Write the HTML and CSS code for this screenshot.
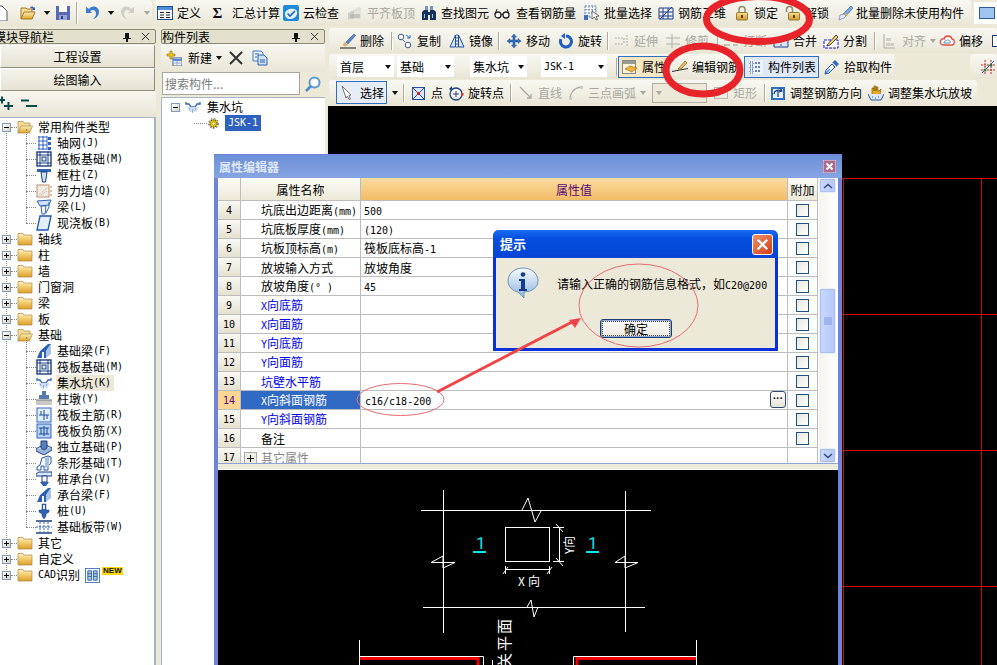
FILE: index.html
```html
<!DOCTYPE html>
<html lang="zh-CN">
<head>
<meta charset="utf-8">
<title>属性编辑器</title>
<link rel="stylesheet" href="styles.css">
</head>
<body>
<svg class="defs" width="0" height="0" aria-hidden="true">
<defs>
<linearGradient id="gFold" x1="0" y1="0" x2="0" y2="1"><stop offset="0" stop-color="#fff3b8"/><stop offset="1" stop-color="#e0a020"/></linearGradient>
<linearGradient id="gGold" x1="0" y1="0" x2="0" y2="1"><stop offset="0" stop-color="#fbe08a"/><stop offset="1" stop-color="#d09a30"/></linearGradient>
<linearGradient id="gBub" x1="0" y1="0" x2="0" y2="1"><stop offset="0" stop-color="#f8fbff"/><stop offset="1" stop-color="#8db4dc"/></linearGradient>
<symbol id="fc" viewBox="0 0 16 16"><path d="M1 4V2.500h5L7 4h8v10H1z" fill="url(#gFold)" stroke="#a88a50" stroke-width=".7"/></symbol>
<symbol id="fo" viewBox="0 0 16 16"><path d="M1 14V2.500h5L7 4h6v3" fill="#f4dd94" stroke="#a88a50" stroke-width=".7"/><path d="M1 14l3-7h11.500l-3 7z" fill="url(#gFold)" stroke="#a88a50" stroke-width=".7"/></symbol>
<symbol id="def" viewBox="0 0 16 16"><rect x=".5" y="1.500" width="15" height="13" fill="#fff" stroke="#1c4f9a"/><path d="M1 2h14v3H1z" fill="#4f8fd8"/><path d="M3 7.500h4M3 10h4M3 12.500h4M9 7.500h4M9 10h4M9 12.500h4" stroke="#223"/></symbol>
<symbol id="cloud" viewBox="0 0 16 16"><rect width="16" height="16" rx="2" fill="#1f8ad8"/><path d="M2 9c0-5 9-7 12-3 1 5-3 8-7 8-3 0-5-2-5-5z" fill="#e8f4ff"/><path d="M4.500 8.500l2.500 2.500 5-5" fill="none" stroke="#1565b0" stroke-width="1.600"/></symbol>
<symbol id="flush" viewBox="0 0 16 16"><path d="M1 14V8l6-3v9z" fill="#cfcfc6"/><path d="M7 14V5l4-3 3 1v11z" fill="#e2e2da"/><path d="M3 10h10M3 12h10" stroke="#a8a8a0"/></symbol>
<symbol id="find" viewBox="0 0 16 16"><path d="M4 1h3v5H4zM9 1h3v5H9z" fill="#7a93b8"/><path d="M1 15V7l2-2h4v10zM9 15V5h4l2 2v8z" fill="#16315e"/><path d="M7 7h2v3H7z" fill="#16315e"/><path d="M3 9h1v4H3zM11 9h1v4h-1z" fill="#9fc0e8"/></symbol>
<symbol id="glass" viewBox="0 0 16 16"><circle cx="4" cy="10" r="3" fill="#fff" stroke="#222" stroke-width="1.300"/><circle cx="12" cy="10" r="3" fill="#fff" stroke="#222" stroke-width="1.300"/><path d="M7 9.500h2M1 9l2-5M15 9l-2-5" stroke="#222"/></symbol>
<symbol id="bsel" viewBox="0 0 16 16"><path d="M1 1h11v11H1z" fill="#fff" stroke="#5a7ab0" stroke-dasharray="2 1"/><path d="M1 4.500h11M1 8h11M5 1v11M8.500 1v11" stroke="#7a96c8" stroke-dasharray="2 1"/><rect y="10" width="4" height="5" fill="#3f6fc0"/><path d="M8 6l7 5-3 .5 1.500 3-1.500.5-1.500-3L8 14z" fill="#fff" stroke="#333" stroke-width=".7"/></symbol>
<symbol id="r3d" viewBox="0 0 16 16"><path d="M1 3h14v11H1zM1 7h14M1 11h14M5 3v11M10 3v11M2 14L14 2" fill="none" stroke="#1c3f90"/></symbol>
<symbol id="lock" viewBox="0 0 16 16"><path d="M5 8V4.500a3 3 0 0 1 6 0V8" fill="none" stroke="#8a8a70" stroke-width="1.500"/><rect x="2.500" y="7.500" width="11" height="7.500" rx="1" fill="url(#gGold)" stroke="#9a7a30"/><rect x="7" y="10" width="2" height="3" fill="#5a4010"/></symbol>
<symbol id="unlock" viewBox="0 0 16 16"><path d="M1.500 7V4.500a3 3 0 0 1 6 0V8" fill="none" stroke="#8a8a70" stroke-width="1.500"/><rect x="3.500" y="7.500" width="11" height="7.500" rx="1" fill="url(#gGold)" stroke="#9a7a30"/><rect x="8" y="10" width="2" height="3" fill="#5a4010"/></symbol>
<symbol id="brush" viewBox="0 0 16 16"><path d="M5 9L13 1l2 2-7 8z" fill="#7fa8e0" stroke="#3a5a9a" stroke-width=".6"/><path d="M8 8l2 2-2 1-2-1z" fill="#e8b040"/><path d="M6 9l-4 1-1 5 5-2 2-2z" fill="#e8e8f8" stroke="#5070b0" stroke-width=".6"/></symbol>
<symbol id="tile" viewBox="0 0 16 16"><rect x=".5" y="2.500" width="15" height="11" fill="#9fc4f0" stroke="#2a5aa0"/></symbol>
<symbol id="del" viewBox="0 0 16 16"><path d="M6 9L14 1l1.500 1.500L8 11z" fill="#5a88c8" stroke="#1c3f80" stroke-width=".5"/><path d="M5 9l3 3-3 1.500-2.500-1.500z" fill="#e0b060"/><path d="M0 15h16" stroke="#1a1a1a"/></symbol>
<symbol id="copy" viewBox="0 0 16 16"><circle cx="4" cy="4" r="2.800" fill="#fff" stroke="#3a5a88"/><circle cx="11" cy="12" r="2.800" fill="#fff" stroke="#3a5a88"/><path d="M9 2l4 3M13 2v3h-3M6 7l2 2" fill="none" stroke="#2f6fc0"/></symbol>
<symbol id="mirror" viewBox="0 0 16 16"><path d="M6.500 2v12H1zM9.500 2v12H15z" fill="#d8e6f8" stroke="#1c4f9a"/><path d="M8 1v14" stroke="#2a5aa0" stroke-dasharray="2 1"/></symbol>
<symbol id="move" viewBox="0 0 16 16"><path d="M8 1l2.500 3H9v3h3V5.500L15 8l-3 2.500V9H9v3h1.500L8 15l-2.500-3H7V9H4v1.500L1 8l3-2.500V7h3V4H5.500z" fill="#2f6fc0" stroke="#14407a" stroke-width=".4"/></symbol>
<symbol id="rot" viewBox="0 0 16 16"><path d="M8 3a5.500 5.500 0 1 1-5 3.200" fill="none" stroke="#1f5fc0" stroke-width="3"/><path d="M7 0v6L3 3z" fill="#1f5fc0"/></symbol>
<symbol id="ext" viewBox="0 0 16 16"><path d="M1 5h9M1 11h9M10 5v6M13 2v12" stroke="#b0b0a8" stroke-dasharray="2 1" fill="none"/></symbol>
<symbol id="trim" viewBox="0 0 16 16"><path d="M7 1v14M1 5h14M1 11h14" stroke="#b0b0a8" fill="none"/></symbol>
<symbol id="brk" viewBox="0 0 16 16"><path d="M1 12h6M10 12h5M1 7h14" stroke="#9a9a90" fill="none"/></symbol>
<symbol id="merge" viewBox="0 0 16 16"><path d="M1 5h14v9H1z" fill="#dbe8f8" stroke="#1c3f90"/><path d="M8 5v9" stroke="#2a5aa0" stroke-dasharray="2 1"/></symbol>
<symbol id="split" viewBox="0 0 16 16"><path d="M1 7h14v8H1z" fill="#fff" stroke="#1010e0" stroke-dasharray="3 1"/><path d="M4 12l9-10 2 2-8 8-3 1z" fill="#f4d060" stroke="#222" stroke-width=".8"/></symbol>
<symbol id="align" viewBox="0 0 16 16"><path d="M2 1v14M2 15h11" stroke="#aaa" fill="none"/><rect x="4" y="5" width="5" height="3" fill="#cfcfc8"/><rect x="4" y="10" width="8" height="3" fill="#cfcfc8"/></symbol>
<symbol id="offs" viewBox="0 0 16 16"><path d="M2 11c-2-3 1-6 3-5 1-4 7-4 8 0 3 0 3 6 0 6H4z" fill="#fff" stroke="#e05040" stroke-width="1.300"/><path d="M5 10c0-2 1-2 2-2 1-2 3-1 3 0 2 0 2 2 0 2z" fill="none" stroke="#5a8ac0"/></symbol>
<symbol id="attr" viewBox="0 0 16 16"><rect x=".5" y="1.500" width="13" height="13" fill="#fdf3d8" stroke="#888"/><path d="M1 2h12v3H1z" fill="#9a9a90"/><path d="M3 10l5-3 7 2-5 4z" fill="#f0b040" stroke="#a06a10" stroke-width=".6"/></symbol>
<symbol id="edit" viewBox="0 0 16 16"><path d="M0 12l16-3v1L0 13z" fill="#333"/><path d="M6 10l7-8 2 2-6 6z" fill="#e8c060" stroke="#705010" stroke-width=".6"/></symbol>
<symbol id="list" viewBox="0 0 16 16"><path d="M1 1h14v14H1z" fill="#eef3fa"/><path d="M2 3h3v3H2zM2 7h3v3H2zM2 11h3v3H2z" fill="#fff" stroke="#2f5fa8" stroke-dasharray="1 1"/><path d="M7 4h6M7 8h6M7 12h6" stroke="#3a5a98" stroke-width="1.500" stroke-dasharray="2 1"/></symbol>
<symbol id="pick" viewBox="0 0 16 16"><path d="M1 15l1-4 6-6 3 3-6 6z" fill="#fff" stroke="#1c4f9a"/><path d="M9 3l2-2 4 4-2 2 0 1-5-5z" fill="#2f6fc0"/><path d="M2 14l4-4" stroke="#3a8ae0" stroke-width="1.500"/></symbol>
<symbol id="snap" viewBox="0 0 16 16"><path d="M1 6h14M1 11h14M5 1v14M11 1v14" stroke="#d02020" stroke-dasharray="2 1" fill="none"/><path d="M2 14L14 2" stroke="#2050c0"/><circle cx="11" cy="6" r="1.500" fill="#208030"/><circle cx="5" cy="11" r="1.500" fill="#208030"/></symbol>
<symbol id="arrowc" viewBox="0 0 16 16"><path d="M4 1l9 9-2 .5 1.500 3.500-1.500.5-1.500-3.500L8 13z" transform="translate(-2 0)" fill="#fff" stroke="#666" stroke-width=".9"/></symbol>
<symbol id="pt" viewBox="0 0 16 16"><rect x="1.500" y="2.500" width="12" height="12" fill="#dbe6f6" stroke="#2a4f98"/><path d="M2 3l11 11M13 3L2 14" stroke="#2a4f98"/><rect x="6" y="7" width="3" height="3" fill="#d02020"/></symbol>
<symbol id="rotpt" viewBox="0 0 16 16"><circle cx="8" cy="9" r="6" fill="#fff" stroke="#1c3f7a" stroke-width="1.300"/><path d="M8 6v6M5 9h6" stroke="#1c3f7a"/><path d="M1 4l3-3v5z" fill="#1c3f7a"/><rect x="13" y="8" width="2.500" height="2.500" fill="#e03020"/></symbol>
<symbol id="line" viewBox="0 0 16 16"><path d="M2 2l11 11M9 13h4V9" fill="none" stroke="#a8a8a0" stroke-width="1.300"/></symbol>
<symbol id="arc" viewBox="0 0 16 16"><path d="M2 15C2 8 6 3 13 2" fill="none" stroke="#b0b0a8" stroke-width="1.500"/><rect x="1" y="12" width="3" height="3" fill="#ccc"/><rect x="12" y="1" width="3" height="3" fill="#ccc"/></symbol>
<symbol id="rect" viewBox="0 0 16 16"><rect x="1.500" y="2.500" width="13" height="11" fill="#ebe9e0" stroke="#b8b8b0"/></symbol>
<symbol id="rectb" viewBox="0 0 16 16"><rect x="1.500" y="2.500" width="13" height="11" fill="#fff" stroke="#223a70"/></symbol>
<symbol id="adj" viewBox="0 0 16 16"><rect x="1" y="2" width="14" height="13" fill="#2f6fc0"/><rect x="3" y="4" width="10" height="9" fill="#e8f0fa"/><path d="M4 9c0-3 4-5 7-3M10 3l2 3-3 1M8 6v6" fill="none" stroke="#163f80" stroke-width="1.200"/></symbol>
<symbol id="adj2" viewBox="0 0 16 16"><path d="M4 8V3h2v3V1h2v5V2h2v4h1l2-2-1 6H4z" fill="#e8a820" stroke="#704a00" stroke-width=".6"/><path d="M0 9l3 6h10l3-6" fill="#dbe8f8" stroke="#2a5aa0"/><path d="M4 12h1M7 13h1M10 12h1" stroke="#2a5aa0"/></symbol>
<symbol id="tg" viewBox="0 0 16 16"><path d="M2 2h9M2 6h9M2 10h9M2 14h9M3 1v14M7 1v14M11 1v14" stroke="#2f62c0" fill="none"/><path d="M12 2h3v3h-3zM12 7h3v3h-3zM12 12h3v3h-3z" fill="#2f62c0"/></symbol>
<symbol id="traft" viewBox="0 0 16 16"><rect x="1" y="1" width="14" height="14" fill="#fff" stroke="#1c3f80" stroke-width="1.400"/><path d="M4 1v14M12 1v14M1 4h14M1 12h14" stroke="#1c3f80"/><rect x="6" y="6" width="4" height="4" fill="#dbe8f8" stroke="#1c3f80"/></symbol>
<symbol id="tcol" viewBox="0 0 16 16"><path d="M1 2h14v3H1z" fill="#2f62b0"/><path d="M5 5h6L9.500 15h-3z" fill="#cfe2f8" stroke="#1c3f80"/></symbol>
<symbol id="twall" viewBox="0 0 16 16"><rect x="1" y="2" width="12" height="12" fill="#f2ebe0" stroke="#c09070"/><path d="M3 12l8-7M5 12l6-4" stroke="#aaa" stroke-dasharray="1 1"/><path d="M14 4h2M14 8h2M14 12h2" stroke="#e07020"/></symbol>
<symbol id="tbeam" viewBox="0 0 16 16"><path d="M1 2l14-1-2 5-9 1z" fill="#cfe2f8" stroke="#2f62b0"/><path d="M5 7h5l-1 8H6z" fill="#fff" stroke="#2f62b0"/><path d="M13 3v5l-3 6" fill="none" stroke="#2f62b0"/></symbol>
<symbol id="tslab" viewBox="0 0 16 16"><path d="M4 1h11l-3 14H1z" fill="#e4eefa" stroke="#1f55b0" stroke-width="1.300"/></symbol>
<symbol id="tfb" viewBox="0 0 16 16"><path d="M1 15l3-7 8-7h3l-5 7v7h-2V9H6v6z" fill="#2f62b0"/><path d="M10 8l4-6 1 1v8l-5 4z" fill="#a8c4e8"/></symbol>
<symbol id="tpit" viewBox="0 0 16 16"><path d="M1 3v2h3l2 3h4l2-3h3V3" fill="none" stroke="#2f62b0" stroke-width="1.300"/><path d="M2 8h12l-3 5H5z" fill="#cfe0f4"/><path d="M4 10h1M7 11h1M10 10h1M7 13h1" stroke="#5a7ab0"/></symbol>
<symbol id="tdun" viewBox="0 0 16 16"><path d="M6 0h4v4H6zM3 4h10v4H3z" fill="#5a78b0"/><path d="M0 9h16v5H0z" fill="#c8c8c4"/><path d="M0 9h16" stroke="#777"/></symbol>
<symbol id="tm" viewBox="0 0 16 16"><rect x="1" y="1" width="14" height="14" fill="#e2edfa" stroke="#2f62c0"/><path d="M3 8h10M8 3v10M5 4v4M11 8v4" stroke="#1c4f9a"/></symbol>
<symbol id="tn" viewBox="0 0 16 16"><rect x="1" y="1" width="14" height="14" fill="#b8d0f0" stroke="#2f62c0"/><path d="M3 5h10M3 11h10M8 3v10M5 5v6M11 5v6" stroke="#1c4f9a"/></symbol>
<symbol id="tind" viewBox="0 0 16 16"><path d="M0 10l8-5 8 4-8 5z" fill="#dbe8f8" stroke="#1c3f80"/><path d="M0 10v2l8 4 8-5V9" fill="#9ab4d8" stroke="#1c3f80"/><path d="M5 2h6v7l-3 2-3-2z" fill="#5a7fb8" stroke="#1c3f80"/></symbol>
<symbol id="tstrip" viewBox="0 0 16 16"><path d="M1 15v-3l3-2 2-7 6-2 3 1v6l-3 3v4H8v-4H5v4z" fill="#fff" stroke="#1f55b0"/><path d="M9 3l4-1v10l-4 1z" fill="#a8c0e0"/></symbol>
<symbol id="tcap" viewBox="0 0 16 16"><path d="M0 3l3-2h13v4H3L0 5z" fill="#dbe8f8" stroke="#1c3f80"/><path d="M6 5h5v6H6z" fill="#fff" stroke="#1c3f80"/><path d="M4 11h9l-3 4H7z" fill="#2f62b0"/></symbol>
<symbol id="tpile" viewBox="0 0 16 16"><path d="M6 1h4v6h3v2l-3 2v2l-2 3-2-3v-2L3 9V7h3z" fill="#2f62b0" stroke="#1c3f80" stroke-width=".5"/><rect x="7" y="2" width="2" height="4" fill="#e2edfa"/></symbol>
<symbol id="tband" viewBox="0 0 16 16"><path d="M0 2h16M0 14h16" stroke="#1c3f80" stroke-width="1.400"/><path d="M4 3v10M8 3v10M12 3v10M0 8h16" stroke="#2f62b0" stroke-dasharray="2 1"/></symbol>
<symbol id="tcad" viewBox="0 0 16 16"><rect x=".5" y=".5" width="15" height="15" fill="#fff" stroke="#4a78b8"/><path d="M3 3h4v10H3zM9 3h4v10H9z" fill="#a8c8f0" stroke="#2f62b0"/><path d="M3 6h4M3 9h4M9 6h4M9 9h4" stroke="#2f62b0"/></symbol>
<symbol id="tgear" viewBox="0 0 16 16"><circle cx="8" cy="8" r="4.500" fill="#f4d800" stroke="#605000" stroke-width="1.400" stroke-dasharray="2 .8"/><circle cx="8" cy="8" r="6" fill="none" stroke="#3a3000" stroke-dasharray="2 2"/><circle cx="8" cy="8" r="2" fill="#fffbd0" stroke="#605000" stroke-width=".6"/></symbol>
<symbol id="newc" viewBox="0 0 16 16"><path d="M4 1h2v3h3v2H6v3H4V6H1V4h3z" fill="#f2c820" stroke="#907000" stroke-width=".6"/><rect x="7" y="8" width="9" height="8" fill="#fff" stroke="#3a5f98"/><path d="M7 9h9v2H7z" fill="#5a8ad0"/><path d="M8 13h7M11 11v5" stroke="#8aa4c8"/></symbol>
<symbol id="dup" viewBox="0 0 16 16"><path d="M1 1h8l2 2v8H1z" fill="#eaf2fc" stroke="#3f78c0"/><path d="M6 5h6l3 3v7H6z" fill="#cfe0f6" stroke="#2f62a8"/><path d="M3 4h4M3 7h2M8 10h5M8 12h5" stroke="#2f62a8"/></symbol>
<symbol id="mag" viewBox="0 0 16 16"><circle cx="9.500" cy="6.500" r="5" fill="#fff" stroke="#5a9ad8" stroke-width="2"/><path d="M6 10l-5 5" stroke="#4a8ac8" stroke-width="2.500"/></symbol>
<symbol id="tnew" viewBox="0 0 16 16"><path d="M0 1h10l5 5v10H0z" fill="#fff" stroke="#556"/></symbol>
<symbol id="topen" viewBox="0 0 16 16"><path d="M1 14V3h5l1 1h5v3" fill="#f4dd94" stroke="#a07a30"/><path d="M1 14l3-7h11l-3 7z" fill="url(#gFold)" stroke="#a07a30"/><path d="M10 3c1-2 3-2 4 0l1-1v3h-3l1-1c-1-1-2-1-3-1z" fill="#2f62b0"/></symbol>
<symbol id="tsave" viewBox="0 0 16 16"><rect x="1" y="1" width="14" height="14" fill="#5868b8"/><rect x="4" y="1" width="8" height="6" fill="#fff"/><rect x="4" y="10" width="8" height="5" fill="#9aa4d0"/><rect x="6" y="11" width="2" height="3" fill="#33407a"/></symbol>
<symbol id="tundo" viewBox="0 0 16 16"><path d="M2 2v6h6L6 6c3-2 6-1 6 3 0 2-1 3-3 5 5-1 6-5 6-8-1-5-7-6-10-2z" fill="#3a7ad0"/></symbol>
<symbol id="tredo" viewBox="0 0 16 16"><path d="M14 2v6H8l2-2c-3-2-6-1-6 3 0 2 1 3 3 5-5-1-6-5-6-8 1-5 7-6 10-2z" fill="#cfcfc8"/></symbol>
</defs>
</svg>

<div class="app">
  <header class="topbar">
    <div class="seg tb-file">
      <svg class="i"><use href="#tnew"/></svg>
      <svg class="i"><use href="#topen"/></svg>
      <i class="arr"></i>
      <svg class="i"><use href="#tsave"/></svg>
      <span class="sep tall"></span>
      <svg class="i"><use href="#tundo"/></svg>
      <i class="arr"></i>
      <svg class="i"><use href="#tredo"/></svg>
      <i class="arr off"></i>
    </div>
    <div class="seg tb-main">
      <span class="it"><svg class="i"><use href="#def"/></svg>定义</span>
      <span class="it"><b class="sigma">Σ</b>汇总计算</span>
      <span class="it"><svg class="i"><use href="#cloud"/></svg>云检查</span>
      <span class="it off"><svg class="i"><use href="#flush"/></svg>平齐板顶</span>
      <span class="it"><svg class="i"><use href="#find"/></svg>查找图元</span>
      <span class="it wide"><svg class="i"><use href="#glass"/></svg>查看钢筋量</span>
      <span class="it"><svg class="i"><use href="#bsel"/></svg>批量选择</span>
      <span class="it"><svg class="i"><use href="#r3d"/></svg>钢筋三维</span>
      <span class="it"><svg class="i"><use href="#lock"/></svg>锁定</span>
      <span class="it"><svg class="i"><use href="#unlock"/></svg>解锁</span>
      <span class="it tight"><svg class="i"><use href="#brush"/></svg>批量删除未使用构件</span>
    </div>
    <div class="tile"><svg class="i"><use href="#tile"/></svg>工</div>
  </header>

  <div class="work">
    <aside class="nav">
      <div class="ptitle nav-title"><span>模块导航栏</span>
        <svg class="pin" viewBox="0 0 10 10"><path d="M3 1h4v5h2v1H6v3H4V7H1V6h2z" fill="#111"/></svg>
        <svg class="cross" viewBox="0 0 10 10"><path d="M1 1l8 8M9 1l-8 8" stroke="#222"/></svg>
      </div>
      <div class="navbtn">工程设置</div>
      <div class="navbtn">绘图输入</div>
      <div class="navtools">
        <svg class="pm" viewBox="0 0 16 16"><path d="M-2 4h7M2 .5v7M4 10h9M8.500 6v8" stroke="#0c4a4a" stroke-width="2"/></svg>
        <svg class="pm" viewBox="0 0 16 16"><path d="M0 4.500h8M5 10h11" stroke="#0c4a4a" stroke-width="2"/></svg>
      </div>
      <ul class="tree">
        <li>
          <div class="row"><i class="exp minus"></i><svg class="i"><use href="#fo"/></svg>常用构件类型</div>
          <ul class="kids">
            <li class="row"><svg class="i"><use href="#tg"/></svg>轴网<span class="m">(J)</span></li>
            <li class="row"><svg class="i"><use href="#traft"/></svg>筏板基础<span class="m">(M)</span></li>
            <li class="row"><svg class="i"><use href="#tcol"/></svg>框柱<span class="m">(Z)</span></li>
            <li class="row"><svg class="i"><use href="#twall"/></svg>剪力墙<span class="m">(Q)</span></li>
            <li class="row"><svg class="i"><use href="#tbeam"/></svg>梁<span class="m">(L)</span></li>
            <li class="row"><svg class="i"><use href="#tslab"/></svg>现浇板<span class="m">(B)</span></li>
          </ul>
        </li>
        <li class="row"><i class="exp plus"></i><svg class="i"><use href="#fc"/></svg>轴线</li>
        <li class="row"><i class="exp plus"></i><svg class="i"><use href="#fc"/></svg>柱</li>
        <li class="row"><i class="exp plus"></i><svg class="i"><use href="#fc"/></svg>墙</li>
        <li class="row"><i class="exp plus"></i><svg class="i"><use href="#fc"/></svg>门窗洞</li>
        <li class="row"><i class="exp plus"></i><svg class="i"><use href="#fc"/></svg>梁</li>
        <li class="row"><i class="exp plus"></i><svg class="i"><use href="#fc"/></svg>板</li>
        <li>
          <div class="row"><i class="exp minus"></i><svg class="i"><use href="#fo"/></svg>基础</div>
          <ul class="kids">
            <li class="row"><svg class="i"><use href="#tfb"/></svg>基础梁<span class="m">(F)</span></li>
            <li class="row"><svg class="i"><use href="#traft"/></svg>筏板基础<span class="m">(M)</span></li>
            <li class="row"><svg class="i"><use href="#tpit"/></svg><span class="curk">集水坑<span class="m">(K)</span></span></li>
            <li class="row"><svg class="i"><use href="#tdun"/></svg>柱墩<span class="m">(Y)</span></li>
            <li class="row"><svg class="i"><use href="#tm"/></svg>筏板主筋<span class="m">(R)</span></li>
            <li class="row"><svg class="i"><use href="#tn"/></svg>筏板负筋<span class="m">(X)</span></li>
            <li class="row"><svg class="i"><use href="#tind"/></svg>独立基础<span class="m">(P)</span></li>
            <li class="row"><svg class="i"><use href="#tstrip"/></svg>条形基础<span class="m">(T)</span></li>
            <li class="row"><svg class="i"><use href="#tcap"/></svg>桩承台<span class="m">(V)</span></li>
            <li class="row"><svg class="i"><use href="#tfb"/></svg>承台梁<span class="m">(F)</span></li>
            <li class="row"><svg class="i"><use href="#tpile"/></svg>桩<span class="m">(U)</span></li>
            <li class="row"><svg class="i"><use href="#tband"/></svg>基础板带<span class="m">(W)</span></li>
          </ul>
        </li>
        <li class="row"><i class="exp plus"></i><svg class="i"><use href="#fc"/></svg>其它</li>
        <li class="row"><i class="exp plus"></i><svg class="i"><use href="#fc"/></svg>自定义</li>
        <li class="row"><i class="exp plus"></i><svg class="i"><use href="#fc"/></svg><span class="m cad">CAD</span>识别<svg class="i cadicon"><use href="#tcad"/></svg><em class="new">NEW</em></li>
      </ul>
    </aside>

    <aside class="comp">
      <div class="ptitle"><span>构件列表</span>
        <svg class="pin" viewBox="0 0 10 10"><path d="M3 1h4v5h2v1H6v3H4V7H1V6h2z" fill="#111"/></svg>
        <svg class="cross" viewBox="0 0 10 10"><path d="M1 1l8 8M9 1l-8 8" stroke="#222"/></svg>
      </div>
      <div class="comptools">
        <svg class="i"><use href="#newc"/></svg><span class="newt">新建</span><i class="arr"></i>
        <svg class="x" viewBox="0 0 14 14"><path d="M1 1l12 12M13 1L1 13" stroke="#333" stroke-width="2"/></svg>
        <svg class="i"><use href="#dup"/></svg>
      </div>
      <div class="search"><div class="sinput">搜索构件...</div><svg class="i"><use href="#mag"/></svg></div>
      <div class="ctree">
        <div class="crow"><i class="exp minus"></i><svg class="i pit"><use href="#tpit"/></svg>集水坑</div>
        <div class="crow child"><svg class="i gear"><use href="#tgear"/></svg><span class="sel m">JSK-1</span></div>
      </div>
    </aside>

    <main class="main">
      <div class="seg r1">
        <span class="it"><svg class="i"><use href="#del"/></svg>删除</span><span class="sep"></span>
        <span class="it"><svg class="i"><use href="#copy"/></svg>复制</span>
        <span class="it"><svg class="i"><use href="#mirror"/></svg>镜像</span><span class="sep"></span>
        <span class="it"><svg class="i"><use href="#move"/></svg>移动</span>
        <span class="it"><svg class="i"><use href="#rot"/></svg>旋转</span><span class="sep"></span>
        <span class="it off"><svg class="i"><use href="#ext"/></svg>延伸</span>
        <span class="it off"><svg class="i"><use href="#trim"/></svg>修剪</span><span class="sep"></span>
        <span class="it off"><svg class="i"><use href="#brk"/></svg>打断</span>
        <span class="it"><svg class="i"><use href="#merge"/></svg>合并</span>
        <span class="it"><svg class="i"><use href="#split"/></svg>分割</span><span class="sep"></span>
        <span class="it off"><svg class="i"><use href="#align"/></svg>对齐<i class="arr off"></i></span>
        <span class="it"><svg class="i"><use href="#offs"/></svg>偏移</span>
        <svg class="i"><use href="#rectb"/></svg>
      </div>
      <div class="rowwrap">
        <div class="seg r2">
          <span class="combo">首层<i class="arr"></i></span>
          <span class="combo">基础<i class="arr"></i></span>
          <span class="combo">集水坑<i class="arr"></i></span>
          <span class="combo m jsk">JSK-1<i class="arr"></i></span>
          <span class="sep"></span>
          <span class="it tog"><svg class="i"><use href="#attr"/></svg>属性</span>
          <span class="it"><svg class="i"><use href="#edit"/></svg>编辑钢筋</span>
          <span class="it tog"><svg class="i"><use href="#list"/></svg>构件列表</span>
          <span class="it"><svg class="i"><use href="#pick"/></svg>拾取构件</span>
        </div>
        <div class="seg r2b"><svg class="i"><use href="#snap"/></svg></div>
      </div>
      <div class="seg r3">
        <span class="it sbtn"><svg class="i"><use href="#arrowc"/></svg>选择</span>
        <i class="arr"></i>
        <span class="sep"></span>
        <span class="it"><svg class="i"><use href="#pt"/></svg>点</span>
        <span class="it"><svg class="i"><use href="#rotpt"/></svg>旋转点</span>
        <span class="sep"></span>
        <span class="it off"><svg class="i"><use href="#line"/></svg>直线</span>
        <span class="it off"><svg class="i"><use href="#arc"/></svg>三点画弧<i class="arr off"></i></span>
        <span class="combo dis"><i class="arr off"></i></span>
        <span class="it off"><svg class="i"><use href="#rect"/></svg>矩形</span>
        <span class="sep"></span>
        <span class="it"><svg class="i"><use href="#adj"/></svg>调整钢筋方向</span>
        <span class="it"><svg class="i"><use href="#adj2"/></svg>调整集水坑放坡</span>
      </div>
      <div class="canvas">
        <svg class="redgrid" viewBox="0 0 669 559">
          <path d="M515 72.500H669M515 208.500H669M515 344.500H669M515 480.500H669M515.500 72V559M653.500 72V559" stroke="#e00000" fill="none"/>
          <path d="M512 72.500h3M512 208.500h3M512 344.500h3M512 480.500h3" stroke="#1c8a1c"/>
        </svg>
      </div>
    </main>
  </div>

  <section class="editor">
    <div class="edtitle">属性编辑器<svg class="edclose" viewBox="0 0 13 13"><rect width="13" height="13" fill="#ab6a8e" stroke="#e8dce8"/><path d="M3.500 3.500l6 6M9.500 3.500l-6 6" stroke="#fff" stroke-width="2"/></svg></div>
    <div class="edbody">
      <div class="tablewrap">
        <div class="propwrap">
        <table class="props">
          <thead><tr><th class="no"></th><th class="nm">属性名称</th><th class="val">属性值</th><th class="add">附加</th></tr></thead>
          <tbody>
            <tr><td class="no">4</td><td class="nm">坑底出边距离<span class="m">(mm)</span></td><td class="v"><span class="m">500</span></td><td class="add"><i class="chk"></i></td></tr>
            <tr><td class="no">5</td><td class="nm">坑底板厚度<span class="m">(mm)</span></td><td class="v"><span class="m">(120)</span></td><td class="add"><i class="chk"></i></td></tr>
            <tr><td class="no">6</td><td class="nm">坑板顶标高<span class="m">(m)</span></td><td class="v">筏板底标高<span class="m">-1</span></td><td class="add"><i class="chk"></i></td></tr>
            <tr><td class="no">7</td><td class="nm">放坡输入方式</td><td class="v">放坡角度</td><td class="add"><i class="chk"></i></td></tr>
            <tr><td class="no">8</td><td class="nm">放坡角度<span class="m">(° )</span></td><td class="v"><span class="m">45</span></td><td class="add"><i class="chk"></i></td></tr>
            <tr class="blue"><td class="no">9</td><td class="nm"><span class="m">X</span>向底筋</td><td class="v"></td><td class="add"><i class="chk"></i></td></tr>
            <tr class="blue"><td class="no">10</td><td class="nm"><span class="m">X</span>向面筋</td><td class="v"></td><td class="add"><i class="chk"></i></td></tr>
            <tr class="blue"><td class="no">11</td><td class="nm"><span class="m">Y</span>向底筋</td><td class="v"></td><td class="add"><i class="chk"></i></td></tr>
            <tr class="blue"><td class="no">12</td><td class="nm"><span class="m">Y</span>向面筋</td><td class="v"></td><td class="add"><i class="chk"></i></td></tr>
            <tr class="blue"><td class="no">13</td><td class="nm">坑壁水平筋</td><td class="v"></td><td class="add"><i class="chk"></i></td></tr>
            <tr class="cur"><td class="no">14</td><td class="nm"><span class="m">X</span>向斜面钢筋</td><td class="v edit"><span class="m">c16/c18-200</span><i class="dots">···</i></td><td class="add"><i class="chk"></i></td></tr>
            <tr class="blue"><td class="no">15</td><td class="nm"><span class="m">Y</span>向斜面钢筋</td><td class="v"></td><td class="add"><i class="chk"></i></td></tr>
            <tr><td class="no">16</td><td class="nm">备注</td><td class="v"></td><td class="add"><i class="chk"></i></td></tr>
            <tr class="grp"><td class="no">17</td><td class="nm"><i class="bplus"></i>其它属性</td><td class="v"></td><td class="add"></td></tr>
          </tbody>
        </table>
        </div>
        <div class="scroll">
          <div class="sb up"><svg viewBox="0 0 10 6"><path d="M1 5l4-3.500L9 5" fill="none" stroke="#3a4a78" stroke-width="1.500"/></svg></div>
          <div class="sb thumb"><svg viewBox="0 0 8 8"><path d="M0 1h8M0 3h8M0 5h8M0 7h8" stroke="#7f9ce0"/></svg></div>
          <div class="sb down"><svg viewBox="0 0 10 6"><path d="M1 1l4 3.500L9 1" fill="none" stroke="#3a4a78" stroke-width="1.500"/></svg></div>
        </div>
      </div>
      <div class="edsep"></div>
      <svg class="draw" viewBox="0 0 620 195">
        <g stroke="#fff" fill="none" transform="translate(-218 -470)">
          <path d="M421 510.500H651M423 607.500H645"/>
          <path d="M443.500 490V633M625.500 491V632"/>
          <path d="M522 510L528 498 535 522 541 511M527 607L531 600 534 617 538 607M431 562.500L443 556V568L455 562.500H431M615 562.500L625 556V568L638 562.500H615"/>
          <rect x="505.500" y="527.500" width="44" height="34"/>
          <path d="M559.500 527V561M553 527.500H564M553 561.500H564M556 524L563 532M556 558L563 566"/>
          <path d="M505.500 566V574M549.500 566V574M505 569.500H549M503 574L508 567M547 574L552 567"/>
          <path d="M359.500 640V665M359.500 656.500H483.500V665M696.500 640V665M573.500 665V656.500H696.500M492.500 660V665"/>
        </g>
        <g class="cyan"><text x="258" y="79">1</text><text x="370" y="79">1</text></g>
        <path d="M255 82h13M368 82h13" stroke="#00e8f0" stroke-width="2"/>
        <text class="dtext" x="300" y="116" textLength="22">X向</text>
        <text class="dtext" transform="translate(356 84) rotate(-90)">Y向</text>
        <text class="dtext big" transform="translate(292 198) rotate(-90)">关平面</text>
        <path d="M142 188.500H260V195M359 195V188.500H478" stroke="#f00000" stroke-width="3" fill="none"/>
      </svg>
    </div>
  </section>

  <section class="alert">
    <div class="altitle">提示<span class="alclose"><svg viewBox="0 0 20 20"><path d="M5 5l10 10M15 5L5 15" stroke="#fff" stroke-width="2.500"/></svg></span></div>
    <div class="albody">
      <div class="almsg">
        <svg class="info" viewBox="0 0 32 32"><path d="M16 1C7 1 1 7 1 14c0 6 5 10 10 11l6 6v-6c8 0 14-5 14-11C31 7 25 1 16 1z" fill="url(#gBub)" stroke="#6f94bc"/><circle cx="16" cy="7.500" r="2.300" fill="#17398a"/><path d="M12 12h6v10h2v2h-8v-2h2v-8h-2z" fill="#17398a"/></svg>
        <p>请输入正确的钢筋信息格式，如<span class="m">C20@200</span></p>
      </div>
      <div class="alfoot"><button class="ok">确定</button></div>
    </div>
  </section>

  <svg class="marks" viewBox="0 0 997 665">
    <ellipse cx="758" cy="19" rx="51.500" ry="22.500" fill="none" stroke="#e8242a" stroke-width="7"/>
    <ellipse cx="703" cy="70" rx="37" ry="24" fill="none" stroke="#e8242a" stroke-width="7"/>
    <ellipse cx="400.500" cy="399.500" rx="43.500" ry="16" fill="none" stroke="#ee6a70"/>
    <ellipse cx="638.500" cy="305.500" rx="59.500" ry="41.500" fill="none" stroke="#ee6a70"/>
    <path d="M437 392L572 322" stroke="#f04448" stroke-width="3"/>
    <path d="M581 318L569 320 575 328z" fill="#f04448"/>
  </svg>
</div>
</body>
</html>
```
FILE: styles.css
```css
* { box-sizing: border-box; }
html, body { margin: 0; padding: 0; background: #ece9d8; }
body { font: 12px/16px "Noto Sans CJK SC", "Noto Sans", sans-serif; color: #000; overflow: hidden; }
ul { list-style: none; margin: 0; padding: 0; }
.defs { position: absolute; }
.m { font-family: "DejaVu Sans Mono", "Liberation Mono", monospace; font-size: 10px; }
.i { width: 16px; height: 16px; flex: none; display: block; }

.app { position: relative; width: 997px; height: 665px; overflow: hidden; background: #ece9d8; display: flex; flex-direction: column; }

/* toolbars */
.seg { background: linear-gradient(#f8f7f1, #f1efe4 55%, #e8e5d4); border-radius: 3px; align-items: center; }
.it { display: flex; align-items: center; gap: 4px; white-space: nowrap; }
.it.tight { gap: 2px; }
.it.wide { gap: 6px; }
.it.off { color: #a8a8a0; }
.sep { display: block; width: 2px; height: 18px; background: #aeac9c; border-right: 1px solid #fff; }
.sep.tall { height: 22px; }
.arr { display: inline-block; width: 0; height: 0; border: 3px solid transparent; border-top: 4px solid #111; border-bottom: 0; flex: none; }
.arr.off { border-top-color: #a8a8a0; }

.topbar { height: 27px; display: flex; flex: none; background: #ece9d8; }
.tb-file { height: 26px; display: grid; grid-template-columns: 28px 24px 11px 21px 8px 24px 12px 24px 8px; margin-left: -8px; width: 160px; }
.tb-main { width: 816px; height: 26px; margin-left: 3px; padding-left: 2px; display: grid; grid-template-columns: 54px 72px 64px 74px 73px 90px 74px 76px 51px 53px 133px; }
.sigma { font: bold 15px/16px "Liberation Serif", serif; text-align: center; color: #111; width: 13px; margin-right: 4px; }
.tile { background: #fff; height: 22px; margin: 2px 0 0 3px; flex: 1; padding-left: 5px; display: flex; align-items: center; gap: 3px; overflow: hidden; }

.work { flex: 1; min-height: 0; display: grid; grid-template-columns: 156px 5px 164px 3px 669px; }

/* panel titles */
.ptitle { height: 15px; margin-top: 2px; display: flex; align-items: center; background: #e3e0cd; border: 1px solid #8a8876; border-radius: 2px; line-height: 13px; position: relative; flex: none; }
.ptitle span { flex: 1; white-space: nowrap; }
.nav-title { margin-left: -2px; }
.nav-title span { margin-left: -5px; }
.pin { width: 10px; height: 10px; margin-right: 9px; }
.cross { width: 9px; height: 9px; margin-right: 5px; }

/* navigation */
.nav { display: flex; flex-direction: column; min-width: 0; }
.navbtn { height: 23px; margin-top: 1px; margin-right: 1px; text-align: center; line-height: 21px; background: linear-gradient(#f5f3ea, #e6e3d3); border: 1px solid #fff; border-color: #fff #8e8c7c #8e8c7c #fff; flex: none; }
.navbtn + .navbtn { margin-top: 0; }
.navtools { height: 26px; display: flex; gap: 5px; align-items: center; background: linear-gradient(#f8f7f1, #e9e6d6); flex: none; }
.pm { width: 16px; height: 16px; display: block; overflow: visible; }
.tree { flex: 1; background: #fff; border: 1px solid #a5b5c5; border-width: 1px 2px 0 0; padding-top: 1px; position: relative; }
.tree::before { content: ""; position: absolute; left: 6px; top: 10px; height: 450px; border-left: 1px dotted #888; }
.row { height: 16px; display: flex; align-items: center; gap: 5px; white-space: nowrap; padding-left: 2px; position: relative; }
.row .m { margin-left: -5px; }
.row .m.cad { margin-left: 0; margin-right: -5px; }
.kids { position: relative; }
.kids::before { content: ""; position: absolute; left: 26px; top: -6px; bottom: 8px; border-left: 1px dotted #888; }
.kids .row { padding-left: 36px; }
.kids .row::before { content: ""; position: absolute; left: 26px; top: 8px; width: 10px; border-top: 1px dotted #888; }
.tree > li > .row::after, .tree > .row::after { content: ""; position: absolute; left: 11px; top: 8px; width: 6px; border-top: 1px dotted #888; }
.exp { width: 9px; height: 9px; flex: none; margin-right: 1px; border: 1px solid #7f9db9; background: linear-gradient(135deg, #fff, #d6d3c4); position: relative; display: block; z-index: 1; }
.exp::before { content: ""; position: absolute; left: 1px; top: 3px; width: 5px; height: 1px; background: #000; }
.exp.plus::after { content: ""; position: absolute; left: 3px; top: 1px; width: 1px; height: 5px; background: #000; }
.curk { background: #ece9d8; padding: 0 3px 0 1px; display: flex; height: 16px; align-items: center; margin-left: -1px; }
.row .curk .m { margin-left: 0; }
.cadicon { width: 15px; height: 15px; }
.new { font: bold 8px/8px "Liberation Sans", sans-serif; background: #ffd800; color: #111; align-self: flex-start; padding: 0 1px; margin-left: -3px; }

/* component list */
.comp { grid-column: 3; display: flex; flex-direction: column; min-width: 0; }
.comptools { height: 28px; display: flex; align-items: center; padding-left: 5px; background: linear-gradient(#f8f7f1, #e9e6d6); flex: none; }
.newt { margin: 0 4px 0 6px; }
.x { width: 14px; height: 14px; margin: 0 9px 0 7px; }
.search { height: 25px; display: flex; align-items: flex-start; gap: 5px; flex: none; }
.search .i { margin-top: 4px; }
.sinput { width: 138px; margin-left: 1px; height: 23px; background: #fff; border: 1px solid #a8a8a0; color: #7c7c7c; line-height: 21px; padding-left: 2px; }
.ctree { flex: 1; background: #fff; border: 1px solid #a5b5c5; border-width: 1px 0 0 1px; padding: 1px 0 0 9px; }
.crow { height: 16px; display: flex; align-items: center; gap: 4px; position: relative; white-space: nowrap; }
.crow .pit { margin-right: 2px; }
.crow.child { margin-left: 36px; }
.crow.child::before { content: ""; position: absolute; left: -13px; top: 8px; width: 13px; border-top: 1px dotted #888; }
.gear { width: 13px; height: 13px; margin-right: 1px; }
.sel { background: #2f62c0; color: #fff; padding: 0 3px; height: 16px; line-height: 16px; }

/* main */
.main { grid-column: 5; display: flex; flex-direction: column; padding-top: 1px; min-width: 0; }
.r1 { height: 25px; padding-left: 11px; margin-left: 1px; display: grid; grid-template-columns: 51px 6px 52px 49px 8px 52px 49px 7px 51px 52px 6px 50px 50px 51px 8px 57px 52px 16px; overflow: hidden; flex: none; }
.rowwrap { display: flex; height: 25px; flex: none; margin-top: 1px; justify-content: space-between; }
.r2 { width: 566px; margin-left: 1px; padding-left: 8px; display: grid; grid-template-columns: 60px 73px 71px 75px 2px 54px 72px 80px 71px; }
.r2b { width: 27px; display: flex; padding-left: 10px; }
.combo { width: 57px; height: 21px; background: #fff; padding: 0 3px; display: flex; align-items: center; justify-content: space-between; }
.combo.jsk { width: 66px; }
.combo.dis { width: 55px; background: #ece9d8; border: 1px solid #b0b0a4; height: 20px; }
.tog { height: 22px; border: 1px solid #2f6fc0; background: #dfe8f5; padding-left: 3px; width: 50px; margin-right: 4px; }
.tog:nth-child(8) { width: 75px; margin: 0; }
.r2 .it:nth-child(6) { background: #f6e7c4; }
.r3 { height: 25px; margin: 1px 20px 0 1px; padding-left: 7px; display: grid; grid-template-columns: 56px 11px 8px 37px 62px 8px 50px 84px 61px 51px 6px 98px 109px; flex: none; }
.sbtn { height: 23px; width: 51px; border: 1px solid #2f6fc0; background: #e6edf6; gap: 4px; padding-left: 3px; }
.canvas { flex: 1; margin-top: 1px; background: #000; position: relative; overflow: hidden; }
.redgrid { position: absolute; inset: 0; width: 669px; height: 559px; display: block; }

/* property editor window */
.editor { position: absolute; left: 214px; top: 154px; width: 628px; height: 511px; display: flex; flex-direction: column; background: #6f83d8; border: 1px solid #6f83d8; border-width: 1px 4px 0 4px; }
.edtitle { height: 23px; line-height: 22px; color: #dfe6f6; font-weight: 700; background: linear-gradient(#6c8fd8, #88a5e2); display: flex; align-items: center; justify-content: space-between; margin: 0 -4px; padding: 0 6px 0 5px; flex: none; }
.edclose { width: 13px; height: 13px; display: block; }
.edbody { flex: 1; display: flex; flex-direction: column; min-height: 0; background: #fff; }
.tablewrap { display: flex; height: 285px; background: #fff; flex: none; }
.propwrap { width: 601px; height: 285px; overflow: hidden; flex: none; }
.props { border-collapse: separate; border-spacing: 0; table-layout: fixed; width: 600px; }
.props th, .props td { height: 19px; padding: 0; border: 0 solid #bdbdbd; border-width: 0 1px 1px 0; font-weight: 400; white-space: nowrap; overflow: hidden; line-height: 15px; }
.props .m { line-height: 12px; }
.props thead th { height: 23px; background: linear-gradient(#fdfcf7, #ece9d8); }
.no { width: 23px; text-align: center; }
.props td.no { background: linear-gradient(#faf9f3, #e4e1cf); font-family: "DejaVu Sans Mono", monospace; font-size: 10px; }
.nm { width: 120px; }
.props td.nm { padding-left: 20px; }
.props th.nm { text-align: center; }
.props td.v { padding-left: 3px; }
.props thead th.val { width: 427px; background: linear-gradient(#fcdca2, #f1bb64); color: #5a0a78; }
.add { width: 30px; text-align: center; }
.chk { display: block; width: 13px; height: 13px; margin: 1px auto 0; border: 1px solid #1c5180; background: linear-gradient(135deg, #e8e6da, #fff); }
.blue .nm { color: #0000f0; }
.props .cur td.no { background: #fbd594; color: #5a0a78; }
.props .cur td.nm { background: #316ac5; color: #fff; }
.props td.edit { position: relative; padding-left: 4px; }
.dots { position: absolute; right: 1px; top: 0; width: 16px; height: 17px; border: 1px solid #2a4a70; border-radius: 3px; background: linear-gradient(#fff, #e6e3d3); font: bold 10px/14px "Liberation Sans", sans-serif; text-align: center; }
.props .grp td.nm { color: #8a8a8a; padding-left: 3px; }
.bplus { display: inline-block; vertical-align: -2px; width: 13px; height: 13px; border: 1px solid #aaa; background: #eeeee6; margin-right: 4px; position: relative; }
.bplus::before { content: ""; position: absolute; left: 2px; top: 5px; width: 7px; height: 1px; background: #111; }
.bplus::after { content: ""; position: absolute; left: 5px; top: 2px; width: 1px; height: 7px; background: #111; }
.scroll { flex: 1; margin-right: 2px; display: flex; flex-direction: column; justify-content: space-between; background: linear-gradient(90deg, #f5f4ec, #fff); position: relative; }
.sb { display: flex; align-items: center; justify-content: center; background: linear-gradient(90deg, #c9d8fb, #b4c8f8); border: 1px solid #e6edfd; border-radius: 2px; box-shadow: 0 0 0 1px #aebfe8 inset; }
.sb svg { width: 10px; height: 8px; }
.up, .down { height: 15px; }
.thumb { position: absolute; top: 110px; left: 0; right: 0; height: 66px; }
.edsep { height: 7px; flex: none; background: linear-gradient(#8ea4d4 0 1px, #eceadb 1px 6px, #fff 6px); }
.draw { flex: 1; min-height: 0; display: block; width: 620px; background: #000; }
.cyan text { fill: #00e8f0; font: 400 17px Roboto, sans-serif; }
.dtext { fill: #fff; font: 12px "Noto Sans CJK SC", sans-serif; }
.dtext.big { font-size: 15px; letter-spacing: 2px; }

/* alert */
.alert { position: absolute; left: 493px; top: 230px; width: 285px; height: 121px; display: flex; flex-direction: column; background: #ece9d8; border: 3px solid #0831d9; border-top: 0; border-radius: 6px 6px 0 0; }
.altitle { margin: 0 -3px; height: 28px; padding: 0 5px 0 7px; background: linear-gradient(#1a6cf0, #0450e0 30%, #0644d4); color: #fff; font-weight: 700; font-size: 13px; line-height: 28px; border-radius: 6px 6px 0 0; display: flex; justify-content: space-between; align-items: center; flex: none; }
.alclose { width: 21px; height: 21px; display: block; background: linear-gradient(135deg, #f0906c, #d23c10); border: 1px solid #fff; border-radius: 3px; }
.alclose svg { width: 19px; height: 19px; display: block; }
.albody { flex: 1; display: flex; flex-direction: column; }
.almsg { display: flex; align-items: flex-start; padding: 9px 0 0 11px; gap: 18px; height: 61px; }
.info { width: 32px; height: 32px; flex: none; }
.almsg p { margin: 9px 0 0; white-space: nowrap; }
.alfoot { display: flex; justify-content: center; margin-left: 1px; }
.ok { width: 72px; height: 19px; margin: 0; padding: 0; font: 12px/15px "Noto Sans CJK SC", sans-serif; color: #000; background: linear-gradient(#fff, #ebe8dc); border: 1px solid #1c3f70; border-radius: 3px; outline: 1px dotted #444; outline-offset: -3px; box-shadow: 0 0 0 1px #8fa8d8 inset; }

.marks { position: absolute; inset: 0; width: 997px; height: 665px; display: block; pointer-events: none; }
```
